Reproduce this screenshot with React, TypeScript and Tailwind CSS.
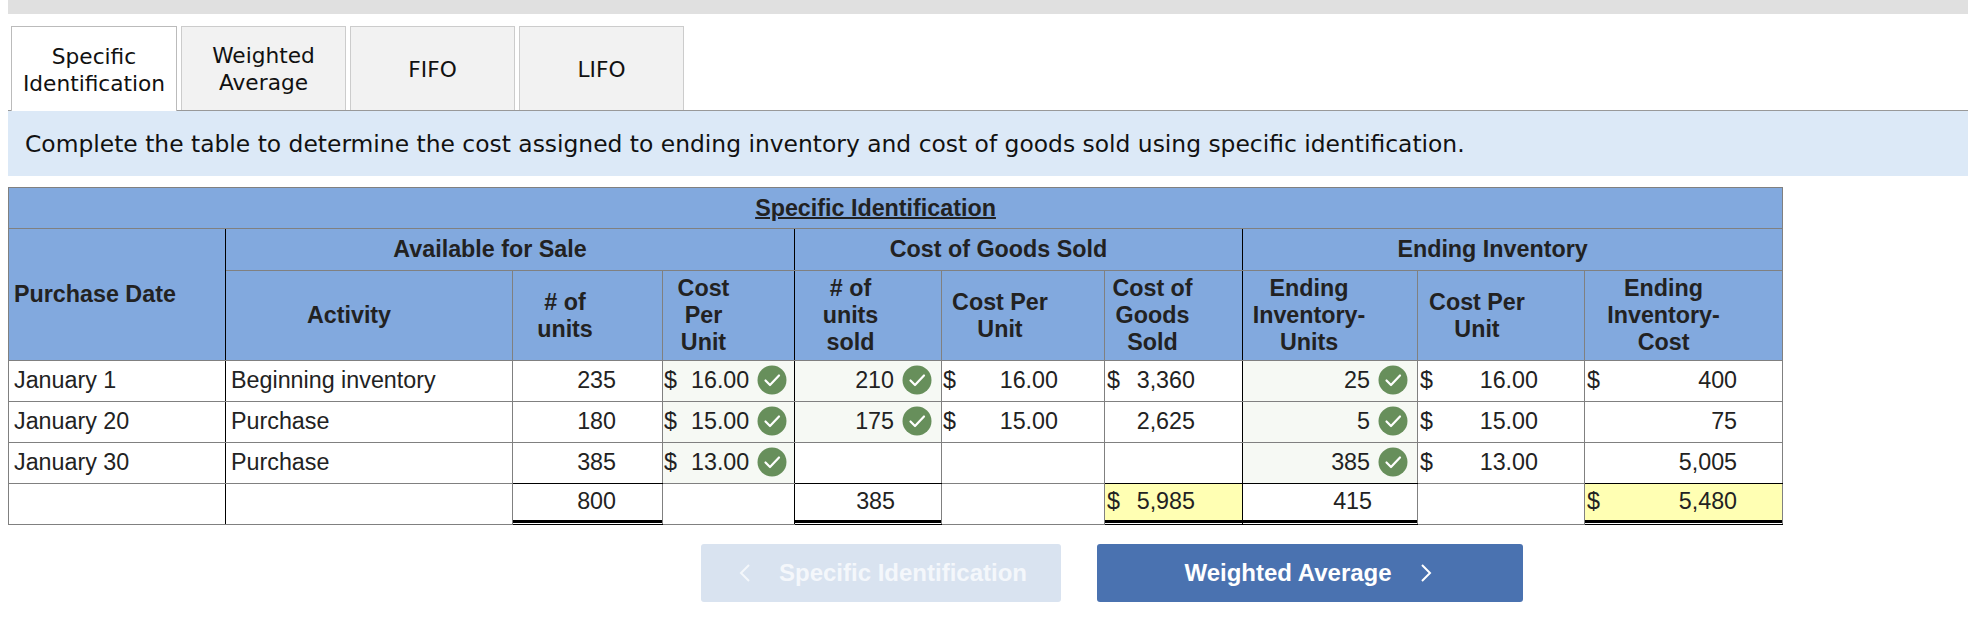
import React from 'react';

function Check() {
  return (
    <svg viewBox="0 0 30 30" className="w-[30px] h-[30px] shrink-0">
      <circle cx="15" cy="15" r="14.5" fill="#678f5b" />
      <path d="M8.5 15.5l4.5 4.5 9-9.5" fill="none" stroke="#fff" strokeWidth="2.2" strokeLinecap="round" strokeLinejoin="round" />
    </svg>
  );
}

const tabs = [
  ['Specific', 'Identification'],
  ['Weighted', 'Average'],
  ['FIFO'],
  ['LIFO'],
];

const rows = [
  { date: 'January 1', activity: 'Beginning inventory', units: '235', cost: '16.00', sold: '210', soldCost: '16.00', cogs: '3,360', dollar: true, end: '25', endCost: '16.00', endTotal: '400' },
  { date: 'January 20', activity: 'Purchase', units: '180', cost: '15.00', sold: '175', soldCost: '15.00', cogs: '2,625', dollar: false, end: '5', endCost: '15.00', endTotal: '75' },
  { date: 'January 30', activity: 'Purchase', units: '385', cost: '13.00', sold: '', soldCost: '', cogs: '', dollar: false, end: '385', endCost: '13.00', endTotal: '5,005' },
];

const head = 'bg-[#82a9de] font-bold text-center align-middle border border-[#808080] leading-[27px] text-[#222]';
const cell = 'h-[41px] border border-[#808080] p-0 pb-[2px] text-[#222]';
const black = 'border-r-black';
// thick rule + thin rule under the totals
const total = 'border-t-black border-b-black shadow-[inset_0_-1px_0_#fff,inset_0_-4px_0_#000]';

export default function App() {
  return (
    <div className="w-[1968px] h-[636px] bg-white overflow-hidden font-['Liberation_Sans',sans-serif] text-[23.3px]">
      <div className="ml-2 h-[14px] bg-[#e0e0e0]" />

      {/* tabs */}
      <div className="mt-3 ml-2 h-[85px] flex items-start gap-1 pl-[3px] border-b border-[#999] font-['DejaVu_Sans',sans-serif] text-[21.7px] leading-[27px] text-[#111]">
        {tabs.map((t, i) => (
          <div
            key={t[0]}
            className={
              i === 0
                ? 'w-[166px] h-[85px] flex flex-col items-center justify-center pt-[1px] bg-white border border-b-0 border-[#bbb] relative z-10'
                : 'w-[165px] h-[84px] flex flex-col items-center justify-center pt-[1px] bg-[#f2f2f2] border border-b-0 border-[#ccc]'
            }
          >
            {t.map((line) => (
              <span key={line}>{line}</span>
            ))}
          </div>
        ))}
      </div>

      <div className="ml-2 h-[65px] flex items-center pl-[17px] pt-[2px] bg-[#dce9f7] font-['DejaVu_Sans',sans-serif] text-[23.4px] text-[#111]">
        Complete the table to determine the cost assigned to ending inventory and cost of goods sold using specific identification.
      </div>

      <table className="ml-2 mt-[11px] w-[1774px] table-fixed border-collapse">
        <colgroup>
          <col className="w-[217px]" />
          <col className="w-[287px]" />
          <col className="w-[150px]" />
          <col className="w-[132px]" />
          <col className="w-[147px]" />
          <col className="w-[163px]" />
          <col className="w-[138px]" />
          <col className="w-[175px]" />
          <col className="w-[167px]" />
          <col className="w-[198px]" />
        </colgroup>
        <thead>
          <tr className="h-[41px]">
            <th colSpan={10} className={`${head} pr-10`}>
              <span className="underline decoration-2">Specific Identification</span>
            </th>
          </tr>
          <tr className="h-[42px]">
            <th rowSpan={2} className={`${head} ${black} text-left pl-[5px]`}>Purchase Date</th>
            <th colSpan={3} className={`${head} ${black} pr-10`}>Available for Sale</th>
            <th colSpan={3} className={`${head} ${black} pr-10`}>Cost of Goods Sold</th>
            <th colSpan={3} className={`${head} pr-10`}>Ending Inventory</th>
          </tr>
          <tr className="h-[90px]">
            <th className={`${head} pr-10`}>Activity</th>
            <th className={`${head} pr-[45px]`}># of<br />units</th>
            <th className={`${head} ${black} pr-[50px]`}>Cost<br />Per<br />Unit</th>
            <th className={`${head} pr-[35px]`}># of<br />units<br />sold</th>
            <th className={`${head} pr-[46px]`}>Cost Per<br />Unit</th>
            <th className={`${head} ${black} pr-[42px]`}>Cost of<br />Goods<br />Sold</th>
            <th className={`${head} pr-[42px]`}>Ending<br />Inventory-<br />Units</th>
            <th className={`${head} pr-[48px]`}>Cost Per<br />Unit</th>
            <th className={`${head} pr-10`}>Ending<br />Inventory-<br />Cost</th>
          </tr>
        </thead>
        <tbody>
          {rows.map((r, i) => {
            const top = i === 2 ? 'border-b-black' : '';
            return (
              <tr key={r.date}>
                <td className={`${cell} ${black} pl-[5px]`}>{r.date}</td>
                <td className={`${cell} pl-[5px]`}>{r.activity}</td>
                <td className={`${cell} ${top} text-right pr-[46px]`}>{r.units}</td>
                <td className={`${cell} ${black} bg-[#f6f9f4] pl-[1px]`}>
                  <div className="flex items-center">
                    <span>$</span>
                    <span className="ml-[14px]">{r.cost}</span>
                    <span className="ml-[8px]"><Check /></span>
                  </div>
                </td>
                <td className={`${cell} ${top} ${r.sold ? 'bg-[#f6f9f4]' : ''}`}>
                  {r.sold && (
                    <div className="flex items-center justify-end pr-[9px] gap-[8px]">
                      <span>{r.sold}</span>
                      <Check />
                    </div>
                  )}
                </td>
                <td className={`${cell} pl-[1px] pr-[46px]`}>
                  {r.soldCost && (
                    <div className="flex justify-between">
                      <span>$</span>
                      <span>{r.soldCost}</span>
                    </div>
                  )}
                </td>
                <td className={`${cell} ${black} ${top} pl-[2px] pr-[47px]`}>
                  <div className="flex justify-between">
                    <span>{r.dollar ? '$' : ''}</span>
                    <span>{r.cogs}</span>
                  </div>
                </td>
                <td className={`${cell} ${top} bg-[#f6f9f4]`}>
                  <div className="flex items-center justify-end pr-[9px] gap-[8px]">
                    <span>{r.end}</span>
                    <Check />
                  </div>
                </td>
                <td className={`${cell} pl-[2px] pr-[46px]`}>
                  <div className="flex justify-between">
                    <span>$</span>
                    <span>{r.endCost}</span>
                  </div>
                </td>
                <td className={`${cell} ${top} pl-[2px] pr-[45px]`}>
                  <div className="flex justify-between">
                    <span>{r.dollar ? '$' : ''}</span>
                    <span>{r.endTotal}</span>
                  </div>
                </td>
              </tr>
            );
          })}
          <tr>
            <td className={`${cell} ${black}`} />
            <td className={cell} />
            <td className={`${cell} ${total} pb-[5px] text-right pr-[46px]`}>800</td>
            <td className={`${cell} ${black}`} />
            <td className={`${cell} ${total} pb-[5px] text-right pr-[46px]`}>385</td>
            <td className={cell} />
            <td className={`${cell} ${black} ${total} pb-[5px] bg-[#ffffb3] pl-[2px] pr-[47px]`}>
              <div className="flex justify-between">
                <span>$</span>
                <span>5,985</span>
              </div>
            </td>
            <td className={`${cell} ${total} pb-[5px] text-right pr-[45px]`}>415</td>
            <td className={cell} />
            <td className={`${cell} ${total} pb-[5px] bg-[#ffffb3] pl-[2px] pr-[45px]`}>
              <div className="flex justify-between">
                <span>$</span>
                <span>5,480</span>
              </div>
            </td>
          </tr>
        </tbody>
      </table>

      {/* prev / next */}
      <div className="mt-[19px] ml-[701px] flex gap-9 text-[24px] font-bold text-white">
        <div className="w-[360px] h-[58px] flex items-center justify-center gap-[28px] pl-[4px] rounded-[3px] bg-[#d9e3f0] text-[#f4f7fb]">
          <svg viewBox="0 0 12 20" className="w-3 h-5" fill="none" stroke="currentColor" strokeWidth="2">
            <path d="M10 2L2 10l8 8" />
          </svg>
          <span>Specific Identification</span>
        </div>
        <div className="w-[426px] h-[58px] flex items-center justify-center gap-[28px] pr-[4px] rounded-[3px] bg-[#4a72b0]">
          <span>Weighted Average</span>
          <svg viewBox="0 0 12 20" className="w-3 h-5" fill="none" stroke="currentColor" strokeWidth="2">
            <path d="M2 2l8 8-8 8" />
          </svg>
        </div>
      </div>
    </div>
  );
}
